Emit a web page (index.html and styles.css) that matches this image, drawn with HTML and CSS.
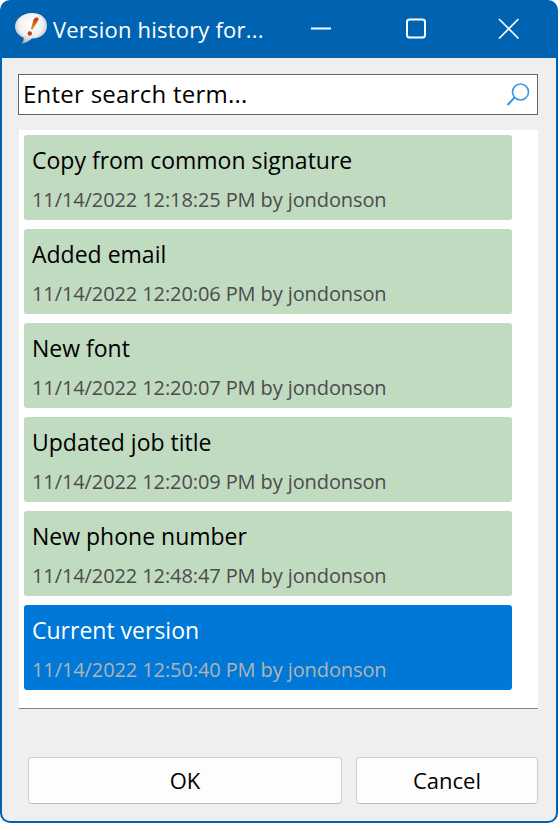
FILE: index.html
```html
<!DOCTYPE html>
<html lang="en">
<head>
<meta charset="utf-8"/>
<title>Version history</title>
<link rel="stylesheet" href="styles.css">
</head>
<body>
<div class="window">
  <div class="titlebar">
    <svg class="app-icon" width="36" height="36" viewBox="0 0 36 36">
      <defs>
        <radialGradient id="bubble" cx="0.5" cy="0.38" r="0.68">
          <stop offset="0" stop-color="#ffffff"/>
          <stop offset="0.55" stop-color="#f0f0f0"/>
          <stop offset="1" stop-color="#9c9c9c"/>
        </radialGradient>
        <linearGradient id="mark" x1="0" y1="0" x2="0" y2="1">
          <stop offset="0" stop-color="#c22f18"/>
          <stop offset="1" stop-color="#e9a01c"/>
        </linearGradient>
      </defs>
      <path d="M18 2C8 2 1 8.500 1 15.500C1 20.500 4.500 24.500 9.500 26.500C10 28.800 9.200 31 7.500 33C12 32 15 29.800 18 27.500C27.500 27.500 33 22 33 14.500C33 7.500 27.500 2 18 2Z" fill="url(#bubble)"/>
      <path d="M22.500 6.500C24 6.200 25 7.200 24.500 8.800L19 18C18.400 19 17 18.800 17 17.500L19.500 8.800C19.900 7.600 21 6.800 22.500 6.500Z" fill="url(#mark)"/>
      <circle cx="15.800" cy="22.500" r="2.200" fill="#b8481a"/>
    </svg>
    <span class="title">Version history for...</span>
    <div class="caption-buttons">
      <svg class="caption-btn" width="94" height="58" viewBox="0 0 94 58"><path d="M35 28.500H55" stroke="#fff" stroke-width="2"/></svg>
      <svg class="caption-btn" width="93" height="58" viewBox="0 0 93 58"><rect x="37" y="19.500" width="18" height="18" rx="2.500" fill="none" stroke="#fff" stroke-width="2"/></svg>
      <svg class="caption-btn" width="93" height="58" viewBox="0 0 93 58"><path d="M36 19L55.500 38.500M55.500 19L36 38.500" stroke="#fff" stroke-width="1.600" fill="none"/></svg>
    </div>
  </div>
  <div class="content">
    <div class="search">
      <span class="search-text">Enter search term...</span>
      <svg class="search-icon" width="26" height="26" viewBox="0 0 26 26">
        <circle cx="15.500" cy="10" r="8" fill="none" stroke="#3a96dd" stroke-width="1.600"/>
        <path d="M9.500 15.500L2.500 23" stroke="#3a96dd" stroke-width="2" fill="none"/>
      </svg>
    </div>
    <div class="list">
      <div class="item">
        <div class="item-name">Copy from common signature</div>
        <div class="item-meta">11/14/2022 12:18:25 PM by jondonson</div>
      </div>
      <div class="item">
        <div class="item-name">Added email</div>
        <div class="item-meta">11/14/2022 12:20:06 PM by jondonson</div>
      </div>
      <div class="item">
        <div class="item-name">New font</div>
        <div class="item-meta">11/14/2022 12:20:07 PM by jondonson</div>
      </div>
      <div class="item">
        <div class="item-name">Updated job title</div>
        <div class="item-meta">11/14/2022 12:20:09 PM by jondonson</div>
      </div>
      <div class="item">
        <div class="item-name">New phone number</div>
        <div class="item-meta">11/14/2022 12:48:47 PM by jondonson</div>
      </div>
      <div class="item current">
        <div class="item-name">Current version</div>
        <div class="item-meta">11/14/2022 12:50:40 PM by jondonson</div>
      </div>
    </div>
    <div class="buttons">
      <button class="btn btn-ok">OK</button>
      <button class="btn btn-cancel">Cancel</button>
    </div>
  </div>
</div>
</body>
</html>
```
FILE: styles.css
```css
html, body {
  margin: 0;
  padding: 0;
  background: #fff;
}
body {
  font-family: 'Open Sans', 'Noto Sans', sans-serif;
  overflow: hidden;
}
.window {
  width: 558px;
  height: 823px;
  box-sizing: border-box;
  display: flex;
  flex-direction: column;
  background: #0063b1;
  border-radius: 10px;
  padding: 0 2px 2px 2px;
  overflow: hidden;
}
.titlebar {
  height: 58px;
  flex: none;
  display: flex;
  align-items: center;
  color: #fff;
}
.app-icon {
  margin-left: 12px;
  margin-top: -1px;
  flex: none;
}
.title {
  margin-left: 3px;
  font-size: 22px;
  letter-spacing: 0.2px;
  white-space: nowrap;
}
.caption-buttons {
  margin-left: auto;
  display: flex;
}
.caption-btn {
  display: block;
}
.content {
  flex: 1;
  background: #efefef;
  border-radius: 0 0 8px 8px;
  padding: 16px 18px 0 16px;
  display: flex;
  flex-direction: column;
}
.search {
  height: 41px;
  box-sizing: border-box;
  border: 1px solid #666;
  background: #fff;
  display: flex;
  align-items: center;
  padding: 0 6px 0 4px;
}
.search-text {
  font-size: 24px;
  line-height: 36px;
  margin-bottom: 1px;
  letter-spacing: 0.25px;
  color: #000;
}
.search-icon {
  margin-left: auto;
}
.list {
  margin: 15px 0 0 1px;
  height: 579px;
  box-sizing: border-box;
  background: #fff;
  border-bottom: 1px solid #868686;
  padding: 5px 26px 0 5px;
  display: flex;
  flex-direction: column;
  gap: 9px;
}
.item {
  height: 85px;
  flex: none;
  box-sizing: border-box;
  background: #c1dbc1;
  border-radius: 3px;
  padding: 9px 8px 0 8px;
}
.item-name {
  font-size: 23px;
  line-height: 32px;
  color: #000;
  white-space: nowrap;
}
.item-meta {
  margin-top: 10px;
  font-size: 20px;
  line-height: 28px;
  letter-spacing: -0.1px;
  color: #4c4c4c;
  white-space: nowrap;
}
.current {
  background: #0078d7;
}
.current .item-name {
  color: #fff;
}
.current .item-meta {
  color: #b3b3b3;
}
.buttons {
  margin-top: 48px;
  padding-left: 10px;
  display: flex;
  gap: 14px;
}
.btn {
  height: 47px;
  box-sizing: border-box;
  border: 1px solid #d0d0d0;
  border-bottom-color: #bcbcbc;
  border-radius: 4px;
  background: #fdfdfd;
  font-family: inherit;
  font-size: 22px;
  color: #000;
  padding: 0 0 2px;
}
.btn-ok {
  width: 314px;
}
.btn-cancel {
  width: 182px;
}
```
